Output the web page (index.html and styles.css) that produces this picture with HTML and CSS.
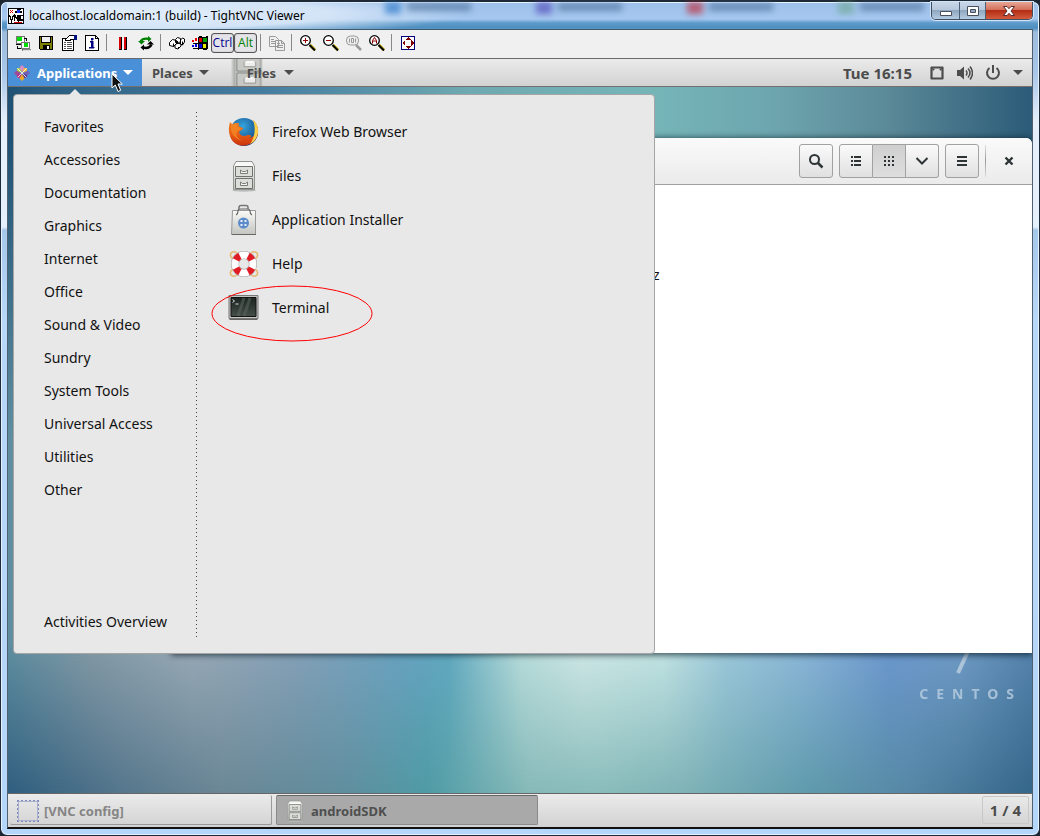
FILE: index.html
```html
<!DOCTYPE html>
<html lang="en">
<head>
<meta charset="utf-8">
<title>localhost.localdomain:1 (build) - TightVNC Viewer</title>
<link rel="stylesheet" href="styles.css">
</head>
<body>
<svg class="defs" aria-hidden="true">
  <defs>
    <linearGradient id="metal" x1="0" y1="0" x2="0" y2="1"><stop offset="0" stop-color="#fafaf8"/><stop offset="1" stop-color="#c3c5c0"/></linearGradient>
    <linearGradient id="fox" x1="0" y1="0" x2="0" y2="1"><stop offset="0" stop-color="#f08a20"/><stop offset=".6" stop-color="#e85a14"/><stop offset="1" stop-color="#c9330c"/></linearGradient>
    <radialGradient id="globe" cx=".45" cy=".3" r=".7"><stop offset="0" stop-color="#35a5dd"/><stop offset="1" stop-color="#123f7f"/></radialGradient>
    <linearGradient id="screen" x1="0" y1="0" x2="0" y2="1"><stop offset="0" stop-color="#1b2420"/><stop offset="1" stop-color="#46504b"/></linearGradient>
    <symbol id="cabinet" viewBox="0 0 32 32">
      <ellipse cx="16" cy="30.500" rx="12" ry="1.200" fill="#bbb"/>
      <path d="M5.500 29.500V6L8 1.500h16L26.500 6v23.500z" fill="url(#metal)" stroke="#92948f"/>
      <path d="M7 5h18" stroke="#fff"/>
      <path d="M7.500 6.500h17v10h-17zM7.500 18.500h17v10h-17z" fill="#dcdeda" stroke="#70726d"/>
      <path d="M12.500 10v3.500h7V10l-2 1.500h-3zM12.500 22v3.500h7V22l-2 1.500h-3z" fill="#f5f5f3" stroke="#7a7c78"/>
    </symbol>
    <symbol id="lens" viewBox="0 0 16 16">
      <path d="M10 10l5 5" stroke="#c8b400" stroke-width="3"/>
      <path d="M9.500 10l5.500 5.500" stroke="currentColor" stroke-width="2"/>
      <circle cx="5.500" cy="5.500" r="4.800" fill="#fff" stroke="currentColor" stroke-width="1.300"/>
    </symbol>
  </defs>
</svg>
<div class="viewer">
  <header class="titlebar">
    <svg class="logo" viewBox="0 0 16 16" shape-rendering="crispEdges">
      <path fill="#fff" stroke="#000" d="M.5.5h15v15H.5z"/>
      <path d="M2 2l3 3M5 2L2 5" stroke="#d00"/><path d="M7 3h7v2H7zM9 1h4v1H9z" fill="#000"/><path d="M9 2h3v3H9z" fill="#1a3cff"/>
      <path d="M1.500 7l2 6 2-6M6.500 13V7l3.500 5V7M14.500 7.500H12V12h2.500" fill="none" stroke="#000" stroke-width="1.500"/><path d="M6 14h8" stroke="#d00"/>
    </svg>
    <span class="title">localhost.localdomain:1 (build) - TightVNC Viewer</span>
    <div class="ghosts" aria-hidden="true">
      <span><i class="blue"></i><i class="line"></i></span><span><i class="violet"></i><i class="line"></i></span><span><i class="red"></i><i class="line"></i></span><span><i class="green"></i><i class="line"></i></span>
    </div>
    <div class="winbuttons">
      <button aria-label="Minimize"><svg viewBox="0 0 14 12"><path d="M1.500 6.500h11v4h-11z" fill="#fff" stroke="#4a4f5c"/></svg></button>
      <button class="winmax" aria-label="Maximize"><svg viewBox="0 0 14 12"><path fill-rule="evenodd" d="M1.500 1.500h11v9h-11zM4.500 4.500v3h5v-3z" fill="#fff" stroke="#4a4f5c"/></svg></button>
      <button class="winclose" aria-label="Close"><svg viewBox="0 0 14 12"><path d="M1.500 1.500h3.500l2 2.200 2-2.200h3.500L9 6l3.500 4.500H9L7 8.300 5 10.500H1.500L5 6z" fill="#fff" stroke="#5a2a2a"/></svg></button>
    </div>
  </header>
  <main class="screen">
    <div class="toolbar">
      <button aria-label="New connection"><svg viewBox="0 0 16 16" shape-rendering="crispEdges"><path d="M1 1h8v7H1z" fill="#fff" stroke="#777"/><path d="M2 2h5v4H2z" fill="#0d0"/><path d="M1 9h6v1H1zM9 3h3v3h-1V4H9zM2 11h1v2h3v1H2z" fill="#000"/><path d="M6.500 7.500h8v6h-8z" fill="#fff" stroke="#777"/><path d="M9 8h4v4H9z" fill="#0d0"/><path d="M7 14h9v2H7z" fill="#ddd" stroke="#333" stroke-width=".5"/></svg></button>
      <button aria-label="Save"><svg viewBox="0 0 16 16" shape-rendering="crispEdges"><path d="M1 1h14v14H2l-1-1z" fill="#000"/><path d="M2 2h1v6h10V2h1v12h-2v-4H5v4H2z" fill="#808000"/><path d="M4 2h8v5H4z" fill="#eee"/><path d="M9 11h2v3H9z" fill="#fff"/></svg></button>
      <button aria-label="Options"><svg viewBox="0 0 16 16" shape-rendering="crispEdges"><path d="M1.500 3.500h11v12h-11z" fill="#fff" stroke="#000"/><path d="M3 7h2M6 7h5M3 9h2M6 9h5M3 11h2M6 11h5M3 13h2M6 13h5" stroke="#555"/><path d="M4 5l3-3 2-2h5v4h-3L8 6z" fill="#fff" stroke="#000"/><path d="M13 0h3v5h-3z" fill="#00127f"/></svg></button>
      <button aria-label="Connection info"><svg viewBox="0 0 16 16" shape-rendering="crispEdges"><path d="M1.500.5h10l3 3v12h-13z" fill="#fff" stroke="#000"/><path d="M11.500.5v3h3" fill="none" stroke="#000"/><path d="M7 3h2v2H7zM6 6h3v6h1v1H5v-1h2V7H6z" fill="#00007f" stroke="#00007f" stroke-width=".5"/></svg></button>
      <span class="sep"></span>
      <button aria-label="Pause"><svg viewBox="0 0 16 16" shape-rendering="crispEdges"><path d="M4 2h3v13H4zM9 2h3v13H9z" fill="#000"/><path d="M4 2h2v12H4zM9 2h2v12H9z" fill="#d80000"/></svg></button>
      <button aria-label="Refresh"><svg viewBox="0 0 16 16"><path d="M2.500 6.500C4 4 7 3 11.500 4" fill="none" stroke="#008000" stroke-width="2.400"/><path d="M0 6h7L3.500 9.500z" fill="#008000"/><path d="M13.500 9.500C12 13 9 13.500 5 12.500" fill="none" stroke="#000" stroke-width="2.400"/><path d="M9 9.500h7L12.500 6zM6 9.500v6L2.500 12.500z" fill="#000"/><path d="M10 1l3.500 3L10 7z" fill="#008000"/></svg></button>
      <span class="sep"></span>
      <button aria-label="Ctrl-Alt-Del"><svg viewBox="0 0 16 16"><path d="M.5 7.500l3-3 4 1v3l-3 3-4-1zM6.500 4.500l2-2 3 1v3l-3 2-2-1zM11.500 5l2-2 2 1v3l-2 3-2-1zM6 10.500l2-2.500 4 1v2l-3 3-3-1z" fill="#fff" stroke="#000"/><path d="M4.500 8.500v3M8.500 6v3M9.500 12v2M13.500 6.500V10" stroke="#000"/></svg></button>
      <button aria-label="Ctrl-Esc"><svg viewBox="0 0 16 16" shape-rendering="crispEdges"><path d="M6 2c3-2 5 1 10-1v13c-4 2-7-1-10 1z" fill="#000"/><path d="M7 3c2-1 2 0 3 0v4c-1 0-2-1-3 0z" fill="#e00000"/><path d="M11 3h4v4h-4z" fill="#009a00"/><path d="M7 9h3v4H7z" fill="#0000e0"/><path d="M11 9h3v4h-3z" fill="#e8e800"/><path d="M0 5h2v2H0zM3 3h2v3H3z" fill="#e00"/><path d="M0 10h2v2H0zM3 9h2v3H3z" fill="#00d"/><path d="M1 8h5M1 13h5" stroke="#000"/></svg></button>
      <button class="key ctrl" aria-pressed="true">Ctrl</button>
      <button class="key alt" aria-pressed="true">Alt</button>
      <span class="sep"></span>
      <button aria-label="Transfer files" disabled><svg viewBox="0 0 16 16"><path d="M.5 1.500h6l3 3v7h-9zM6.500 5.500h6l3 3v7h-9z" fill="#f0f0f0" stroke="#999"/><path d="M2 4.500h3M2 6.500h4M2 8.500h4M8 8.500h3M8 10.500h6M8 12.500h6M12.500 5.500v3h3" fill="none" stroke="#999"/></svg></button>
      <span class="sep"></span>
      <button aria-label="Zoom in"><svg viewBox="0 0 16 16"><use href="#lens"/><path d="M3 5.500h5M5.500 3v5" stroke="#900000"/></svg></button>
      <button aria-label="Zoom out"><svg viewBox="0 0 16 16"><use href="#lens"/><path d="M3 5.500h5" stroke="#900000"/></svg></button>
      <button aria-label="Zoom 100%" disabled><svg viewBox="0 0 16 16"><path d="M10 10l5 5" stroke="#999" stroke-width="2.500"/><rect x=".5" y="1" width="12" height="9" rx="4" fill="#eee" stroke="#999"/><path d="M3.500 3.500v4M9.500 3.500v4M5.500 3.500h2v4h-2z" fill="none" stroke="#999"/></svg></button>
      <button aria-label="Zoom auto"><svg viewBox="0 0 16 16"><use href="#lens"/><path d="M3.500 8.500v-3l2-3 2 3v3M3.500 6h4" fill="none" stroke="#900000"/></svg></button>
      <span class="sep"></span>
      <button aria-label="Full screen"><svg viewBox="0 0 16 16" shape-rendering="crispEdges"><path d="M1.500 1.500h13v13h-13z" fill="#fff" stroke="#00007f"/><path d="M8 2l3 3H5zM8 14l3-3H5zM2 8l3-3v6zM14 8l-3-3v6z" fill="#800000"/></svg></button>
    </div>

    <nav class="panel top">
      <button class="pmenu active">
        <svg class="centos" viewBox="0 0 16 16"><path d="M3 3h4.500v4.500H3z" fill="#a6cf4a"/><path d="M8.500 3H13v4.500H8.500z" fill="#f3b63f"/><path d="M3 8.500h4.500V13H3z" fill="#b2328b"/><path d="M8.500 8.500H13V13H8.500z" fill="#5b3f91"/><path d="M8 0l2.500 2.500L8 7 5.500 2.500z" fill="#d98bc4"/><path d="M16 8l-2.500 2.500L9 8l4.500-2.500z" fill="#7460b8"/><path d="M8 16l2.500-2.500L8 9l-2.500 4.500z" fill="#efa724"/><path d="M0 8l2.500 2.500L7 8 2.500 5.500z" fill="#a04a98"/><path d="M3.500 3.500l9 9M12.500 3.500l-9 9" stroke="#fff" stroke-width=".8"/></svg>
        Applications <span class="caret"></span>
        <svg class="cursor" viewBox="0 0 12 20"><path d="M1 1v14l3.300-3 2.700 6.500 2.700-1.200L7 11h4.300z" fill="#111" stroke="#fff"/></svg>
      </button>
      <button class="pmenu">Places <span class="caret"></span></button>
      <button class="pmenu app">
        <svg class="appicon" viewBox="0 0 32 28"><path d="M0 0h32v28H0z" fill="#c4c6c2"/><path d="M2 0h2v28H2zM29 0h2v28h-2z" fill="#a6a8a4"/><path d="M5.500 0v12.500h26M5.500 28V14.500h26" fill="none" stroke="#747672"/><path d="M13 3v5h12V3M13 20v5h12v-5" fill="#efefed" stroke="#8a8c88"/><path d="M15 3h8M15 20h8" stroke="#fff" stroke-width="2"/></svg>
        <span>Files</span> <span class="caret"></span>
      </button>
      <div class="status">
        <button class="clock">Tue 16:15</button>
        <button class="tray" aria-label="System menu">
          <svg viewBox="0 0 16 16"><path d="M2.500 2.500h11v11h-11z" fill="none" stroke="#4c4c4c" stroke-width="2.200" stroke-linejoin="round"/><path d="M3 3l3 1-2 2zM13 3l-3 1 2 2z" fill="#4c4c4c"/></svg>
          <svg viewBox="0 0 16 16"><path d="M0 5h3l4-3.500v13L3 11H0z" fill="#4c4c4c"/><path d="M9 5.500q2 2.500 0 5M11 3.500q4 4.500 0 9M13 1.500q5 6.500 0 13" fill="none" stroke="#4c4c4c" stroke-width="1.500"/></svg>
          <svg viewBox="0 0 16 16"><path d="M4.500 3a6 6 0 1 0 7 0M8 0v8" fill="none" stroke="#4c4c4c" stroke-width="2"/></svg>
          <span class="caret"></span>
        </button>
      </div>
    </nav>

    <section class="desktop">
      <div class="brand"><svg viewBox="0 0 16 26"><path d="M14 0L3 24" stroke="#b9cde0" stroke-width="4"/></svg><span>CENTOS</span></div>
      <section class="files">
        <header class="headerbar">
          <button class="hb" aria-label="Search"><svg viewBox="0 0 16 16"><circle cx="6.500" cy="6.500" r="4.500" fill="none" stroke="#2e3436" stroke-width="2"/><path d="M10 10l4.500 4.500" stroke="#2e3436" stroke-width="2.500"/></svg></button>
          <div class="linked">
            <button class="hb" aria-label="List view"><svg viewBox="0 0 16 16"><path d="M3 4h2M3 8h2M3 12h2M6 4h7M6 8h7M6 12h7" stroke="#2e3436" stroke-width="2"/></svg></button>
            <button class="hb on" aria-label="Icon view" aria-pressed="true"><svg viewBox="0 0 16 16"><path d="M3 4h10M3 8h10M3 12h10" stroke="#2e3436" stroke-width="2" stroke-dasharray="2 2"/></svg></button>
            <button class="hb" aria-label="View options"><svg viewBox="0 0 16 16"><path d="M2.500 5L8 10.500 13.500 5" fill="none" stroke="#2e3436" stroke-width="2"/></svg></button>
          </div>
          <button class="hb" aria-label="Menu"><svg viewBox="0 0 16 16"><path d="M3 4h10M3 8h10M3 12h10" stroke="#2e3436" stroke-width="2"/></svg></button>
          <span class="hsep"></span>
          <button class="hb flat" aria-label="Close"><svg viewBox="0 0 16 16"><path d="M4.500 4.500l7 7M11.500 4.500l-7 7" stroke="#2e3436" stroke-width="2.400"/></svg></button>
        </header>
        <div class="folder"><span>z</span></div>
      </section>

      <div class="appmenu">
        <span class="pointer"></span>
        <ul class="categories">
          <li><a href="#">Favorites</a></li><li><a href="#">Accessories</a></li><li><a href="#">Documentation</a></li><li><a href="#">Graphics</a></li><li><a href="#">Internet</a></li><li><a href="#">Office</a></li><li><a href="#">Sound &amp; Video</a></li><li><a href="#">Sundry</a></li><li><a href="#">System Tools</a></li><li><a href="#">Universal Access</a></li><li><a href="#">Utilities</a></li><li><a href="#">Other</a></li>
          <li class="last"><a href="#">Activities Overview</a></li>
        </ul>
        <ul class="apps">
          <li><a href="#"><svg viewBox="0 0 32 32"><circle cx="16" cy="16" r="14" fill="url(#globe)"/><path d="M24 3c7 5 8 15 3 21-7 9-22 7-25-4-2-5-1-10 0-14l3 3c2-2 4-2 6-2-1 2 0 3 1 4l3 1c0 2-2 2-4 4 1 4 5 5 9 3 4 0 4 2 1 3 4 0 8-5 7-11 0-3-2-6-4-8z" fill="url(#fox)"/><path d="M25 4c6 5 6 13 3 18-1 3-4 5-6 6 5-6 6-16 3-24z" fill="#fbd24a"/><path d="M3 9c2-2 4-2 6-2-1 2 0 3 1 4l3 1c0 2-2 2-4 4-2 4 2 7 5 8-7 0-12-7-11-15z" fill="#f58b28" opacity=".7"/></svg>Firefox Web Browser</a></li>
          <li><a href="#"><svg viewBox="0 0 32 32"><use href="#cabinet"/></svg>Files</a></li>
          <li><a href="#"><svg viewBox="0 0 32 32"><path d="M11 5V3.500q0-2 2-2h5q2 0 2 2V5" fill="none" stroke="#777" stroke-width="1.500"/><path d="M4.500 6.500h23v24h-24z" fill="url(#metal)" stroke="#999"/><path d="M4 30.500h24" stroke="#666"/><path d="M8 11q2-1 2-4 0-2 3-2h6q3 0 3 2 0 3 2 4" fill="none" stroke="#666" stroke-width="1.200"/><circle cx="15.500" cy="19" r="5.500" fill="#5d8bca"/><path d="M12.500 16h2v2h-2zM16.500 16h2v2h-2zM12.500 20h2v2h-2zM16.500 20h2v2h-2z" fill="#e8effa"/></svg>Application Installer</a></li>
          <li><a href="#"><svg viewBox="0 0 32 32"><g fill="none" stroke="#e8b76a" stroke-width="1.500"><path d="M9 5c-4-3-8 0-6 4l3 3M23 5c4-3 8 0 6 4l-3 3M9 27c-4 3-8 0-6-4l3-3M23 27c4 3 8 0 6-4l-3-3"/></g><circle cx="16" cy="16" r="9" fill="none" stroke="#999" stroke-width="8"/><circle cx="16" cy="16" r="9" fill="none" stroke="#fff" stroke-width="7"/><circle cx="16" cy="16" r="9" fill="none" stroke="#e01c24" stroke-width="7" pathLength="80" stroke-dasharray="8 12" stroke-dashoffset="-6"/></svg>Help</a></li>
          <li><a href="#"><svg viewBox="0 0 32 32"><path d="M1.500 5h28v23h-28z" fill="#666"/><path d="M1 3.500h29v23H1z" fill="#c4c6c2" stroke="#777"/><path d="M3 5.500h25v19H3z" fill="url(#screen)" stroke="#111"/><path d="M16 6l-6 18M22 6l-6 18" stroke="#5c665f" opacity=".55" stroke-width="3"/><path d="M4.500 7.500l2 1.500-2 1.500M7.500 12h3" fill="none" stroke="#ddd"/></svg>Terminal</a>
            <svg class="ring" viewBox="0 0 162 57"><ellipse cx="81" cy="28.500" rx="80" ry="27.500" fill="none" stroke="#f00"/></svg></li>
        </ul>
      </div>
    </section>

    <footer class="panel bottom">
      <button class="task"><span class="dots"></span>[VNC config]</button>
      <button class="task current"><svg viewBox="0 0 32 32"><use href="#cabinet"/></svg>androidSDK</button>
      <button class="pager">1 / 4</button>
    </footer>
  </main>
</div>
</body>
</html>
```
FILE: styles.css
```css
* { box-sizing: border-box; }
body { margin: 0; background: #1c2430; font: 14px/20px "Noto Sans", sans-serif; color: #111; }
button { margin: 0; padding: 0; border: 0; background: none; font: inherit; color: inherit; }
a { color: inherit; text-decoration: none; }
ul { margin: 0; padding: 0; list-style: none; }
svg { display: block; flex: none; }
.defs { position: absolute; width: 0; height: 0; }

.viewer {
  display: flex; flex-direction: column; min-height: 100vh; padding: 0 6px 6px;
  border: 1px solid #1f2a38; border-top-width: 2px; border-radius: 7px;
  background: linear-gradient(#9dc0ea, #a6c8f0 17px, #5c9aca 21px, #4f8fc0 26px, #9dbbdc 30px, #a8c6e8 70px, #e6effa 120px, #e4f0fc 225px, #a6c8ea 228px, #b8d8fa 320px, #b4d6fa);
  box-shadow: inset 0 0 0 1px #e4f2ff;
}
.titlebar { display: flex; align-items: center; height: 27px; padding-left: 1px; background: radial-gradient(ellipse 340px 24px at 120px 12px, #e2eefb, #d3e4f7 60%, transparent); }
.logo { width: 16px; height: 16px; margin-right: 5px; }
.title { font: 12px/16px "Noto Sans", sans-serif; color: #000; white-space: nowrap; }
.ghosts { flex: 1; min-width: 0; display: flex; align-self: flex-start; padding-left: 80px; height: 16px; overflow: hidden; filter: blur(3px); opacity: .6; }
.ghosts span { flex: none; display: flex; gap: 6px; width: 151px; }
.ghosts i { width: 16px; height: 12px; }
.ghosts .line { width: 64px; height: 8px; margin-top: 1px; background: #456a94; }
.ghosts .blue { background: #1d6fc4; }
.ghosts .violet { background: #4b3fb5; }
.ghosts .red { background: #c3202a; }
.ghosts .green { background: #6aa58c; }
.winbuttons { display: flex; align-self: flex-start; border: 1px solid #3d4d63; border-top: 0; border-radius: 0 0 5px 5px; overflow: hidden; box-shadow: 0 0 0 1px #d3e5f7; }
.winbuttons button { display: flex; align-items: center; justify-content: center; width: 28px; height: 17px; border-right: 1px solid #4e6078; background: linear-gradient(#c8d7e8, #b8c8dc 45%, #90a7c1 50%, #b4cbe2); }
.winbuttons .winmax { width: 26px; }
.winbuttons svg { width: 14px; height: 12px; }
.winbuttons .winclose { width: 46px; border: 0; background: linear-gradient(#e6a795, #d4705b 45%, #b32c15 50%, #d35c3c); }

.screen { flex: 1; display: flex; flex-direction: column; border: 1px solid #51606e; border-top-color: #3c5a6c; border-bottom: 2px solid #111; background: #f0f0f0; }
.toolbar { display: flex; align-items: center; height: 29px; padding: 0 4px 3px 3px; background: #f0f0f0; border-bottom: 1px solid #6a6a6a; }
.toolbar button { display: flex; align-items: center; justify-content: center; width: 23px; height: 22px; color: #000; }
.toolbar svg { width: 16px; height: 16px; }
.toolbar .sep { width: 8px; height: 17px; background: linear-gradient(#888, #888) 3px 0 / 1px 100% no-repeat; }
.toolbar .key { height: 20px; border: 1px solid #555; border-radius: 3px; background: #e4e4e8; font: 12px/16px "Open Sans", sans-serif; box-shadow: inset 0 0 1px #777; }
.toolbar .ctrl { color: #00008b; }
.toolbar .alt { color: #008000; }

.panel { display: flex; align-items: stretch; background: linear-gradient(#ebebeb, #d2d2d2); color: #4c4c4c; font-weight: 700; font-size: 13px; }
.top { height: 28px; border-bottom: 1px solid #75706e; }
.caret { width: 0; height: 0; border: 5px solid transparent; border-top-color: currentColor; border-bottom: 0; }
.pmenu { position: relative; display: flex; align-items: center; gap: 6px; padding: 0 10px; }
.pmenu.active { width: 134px; padding: 0 9px 0 6px; background: #4a90d9; color: #fff; }
.pmenu.active .caret { margin-left: auto; }
.centos { width: 16px; height: 16px; margin-right: 1px; }
.cursor { position: absolute; left: 103px; top: 14px; width: 12px; height: 20px; z-index: 5; }
.pmenu.app { padding-left: 28px; gap: 8px; }
.pmenu.app span { position: relative; }
.appicon { position: absolute; left: 12px; top: 0; width: 32px; height: 27px; opacity: .85; }
.status { display: flex; margin-left: auto; padding-right: 9px; }
.clock { font-size: 15px; }
.tray { display: flex; align-items: center; gap: 12px; padding-left: 17px; }
.tray svg { width: 16px; height: 16px; }

.desktop { position: relative; flex: 1; min-height: 560px; overflow: hidden; background: linear-gradient(90deg, #5f8ea0, #8299a5 8%, #98a9b6 18%, #85a1b8 28%, #6aa2c0 38%, #60a8c0 43%, #b7dcdb 50%, #cfe8e6 56%, #c4e4e4 64%, #9dc9db 70%, #8ab5d8 78%, #6c98cf 86%, #6f9bc5 93%, #5583ac); }
.desktop::before, .desktop::after { content: ""; position: absolute; inset: 0; }
.desktop::before { background: linear-gradient(90deg, #1f5174, #33678a 8%, #457da0 25%, #6fa9b1 45%, #75b5b8 63%, #6da5ae 75%, #5b8998 86%, #2b5b78); mask-image: linear-gradient(#000 8%, transparent 50%); }
.desktop::after { background: linear-gradient(90deg, #2f5e7e, #55768c 11%, #6b8795 21%, #608e9e 33%, #4f9ba5 41%, #86b9b8 51%, #88bcba 58%, #7eb2b6 66%, #5f9aac 78%, #5687a5 88%, #35668a); mask-image: linear-gradient(transparent 79%, #000 100%); }
.brand { position: absolute; z-index: 1; right: 10px; top: 562px; display: flex; flex-direction: column; align-items: center; color: #b4cbe0; font: 700 14px/16px "Noto Sans", sans-serif; letter-spacing: 8px; opacity: .85; }
.brand svg { width: 16px; height: 26px; margin: 0 16px 11px 0; }

.files { position: absolute; z-index: 2; left: 164px; right: 0; top: 51px; height: 515px; display: flex; flex-direction: column; border-radius: 6px 6px 0 0; background: #fff; box-shadow: 0 1px 6px 1px rgba(0, 20, 30, .7); }
.headerbar { display: flex; align-items: center; justify-content: flex-end; gap: 6px; height: 47px; padding-right: 6px; border-bottom: 1px solid #a0a0a0; border-radius: 6px 6px 0 0; background: linear-gradient(#fafafa, #ebebeb); }
.hb { display: flex; align-items: center; justify-content: center; width: 34px; height: 34px; border: 1px solid #a1a1a1; border-radius: 3px; background: linear-gradient(#fafafa, #e0e0e0); }
.hb svg { width: 16px; height: 16px; }
.hb.flat { border-color: transparent; background: none; }
.linked { display: flex; }
.linked .hb + .hb { width: 33px; border-left: 0; }
.linked .hb:first-child { border-radius: 3px 0 0 3px; }
.linked .hb:nth-child(2) { border-radius: 0; }
.linked .hb:last-child { border-radius: 0 3px 3px 0; }
.linked .on { background: linear-gradient(#cfcfcf, #dedede); }
.hsep { width: 1px; height: 32px; background: linear-gradient(#ddd, #999, #ddd); }
.folder { flex: 1; padding: 80px 0 0 481px; }

.appmenu { position: absolute; z-index: 3; left: 5px; top: 7px; width: 642px; display: flex; padding: 15px 0; border: 1px solid #a5a5a5; border-radius: 4px; background: #e8e8e8; min-height: 560px; }
.pointer { position: absolute; left: 55px; top: -6px; border: 6px solid transparent; border-bottom-color: #e8e8e8; border-top: 0; }
.categories { display: flex; flex-direction: column; width: 183px; padding-left: 30px; background: repeating-linear-gradient(#444 0 1px, transparent 1px 4px) 182px 2px / 1px 525px no-repeat; }
.categories a { display: block; line-height: 33px; }
.categories .last { margin-top: auto; }
.apps { flex: 1; padding-left: 31px; }
.apps li { position: relative; }
.apps a { display: flex; align-items: center; gap: 12px; height: 44px; }
.apps a svg { width: 32px; height: 32px; }
.ring { position: absolute; left: -17px; top: -1px; width: 162px; height: 57px; pointer-events: none; }

.bottom { height: 34px; gap: 4px; padding: 1px 3px 2px 2px; border-top: 1px solid #666; }
.task { display: flex; align-items: center; gap: 5px; width: 262px; padding: 2px 0 0 7px; border-right: 1px solid #999; border-bottom: 1px solid #999; border-radius: 2px; color: #858585; }
.task.current { border: 1px solid #8a8a8a; border-top-color: #666; background: #a9a9a9; color: #4f4f4f; }
.task svg { width: 22px; height: 22px; }
.dots { width: 22px; height: 22px; border: 2px dotted #7f88b8; outline: 1px solid #aab0d0; outline-offset: -2px; }
.pager { margin: 1px 0 1px auto; padding: 0 7px; border: 1px solid #c8c8c8; border-radius: 2px; font-size: 15px; }
```
